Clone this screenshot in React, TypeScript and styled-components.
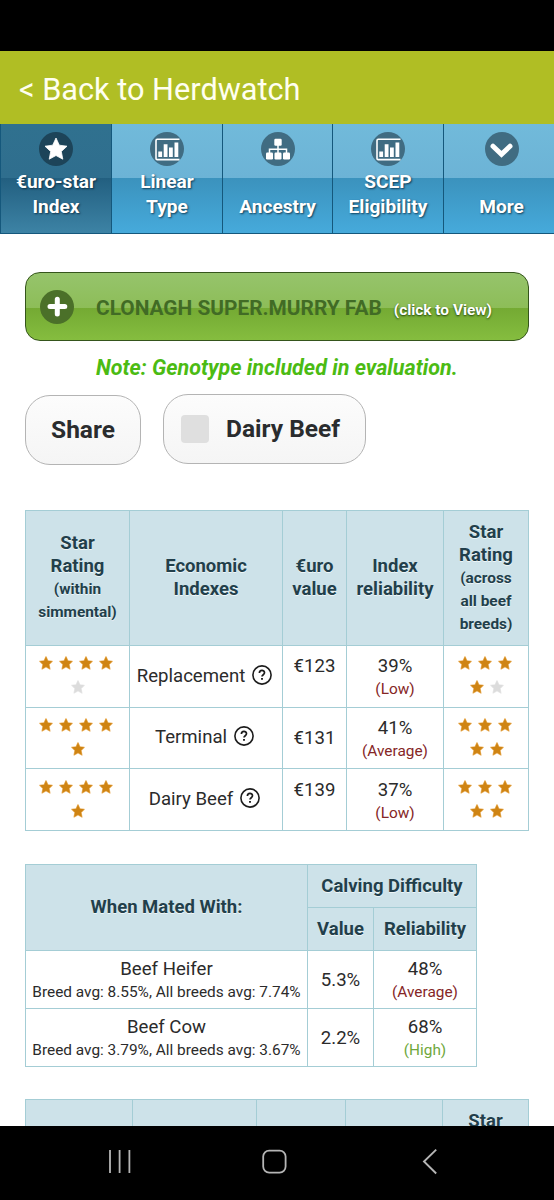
import React from 'react';
import styled, { createGlobalStyle, css } from 'styled-components';

const GlobalStyle = createGlobalStyle`
  *, *::before, *::after { box-sizing: border-box; }
  html, body { margin: 0; padding: 0; background: #fff; }
  body { font-family: Roboto, "Liberation Sans", sans-serif; color: #2b2b2b; }
  button { font-family: inherit; }
`;

const Screen = styled.div`
  width: 554px;
  height: 1200px;
  display: flex;
  flex-direction: column;
  overflow: hidden;
  background: #fff;
`;

const StatusBar = styled.div`
  height: 51px;
  flex: none;
  background: #000;
`;

const BackBar = styled.header`
  height: 73px;
  flex: none;
  display: flex;
  align-items: center;
  padding: 4px 0 0 19px;
  background: #b0be24;
  color: #fffff0;
  font-size: 30.7px;
  white-space: pre;
`;

const TabBar = styled.nav`
  height: 110px;
  flex: none;
  display: grid;
  grid-template-columns: 112px 111px 110px 111px 116px;
  width: 560px;
  border-bottom: 1px solid #15587c;
`;

const Tab = styled.a<{ $active?: boolean }>`
  display: flex;
  flex-direction: column;
  align-items: center;
  justify-content: space-between;
  padding: 8px 0 14px;
  border-right: 1px solid #15587c;
  color: #fff;
  font-size: 19.1px;
  font-weight: 700;
  line-height: 25px;
  text-align: center;
  white-space: pre-line;
  text-shadow: 1px 1px 2px rgba(0, 30, 50, 0.75);
  background: linear-gradient(#71bada 0, #6cb3d6 54px, #3b92bd 54px, #46aadb 109px);
  ${(p) =>
    p.$active &&
    css`
      border-left: 1px solid #15587c;
      background: linear-gradient(#30718f 0, #2f6e8e 54px, #225f80 54px, #3d83a5 109px);
    `}
`;

const Disc = styled.span<{ $tone: string }>`
  display: flex;
  flex: none;
  width: 34px;
  height: 34px;
  border-radius: 50%;
  background: ${(p) => p.$tone};
`;

const Content = styled.main`
  flex: 1;
  min-height: 0;
  overflow: hidden;
  padding: 38px 25px 0;
`;

const AnimalButton = styled.button`
  display: flex;
  align-items: center;
  width: 504px;
  height: 69px;
  padding: 0 0 0 14px;
  border: 1px solid #35551c;
  border-radius: 15px;
  background: linear-gradient(#96c46c 0, #8dbd58 35px, #74aa33 35px, #85bd3f 67px);
`;

const AnimalName = styled.span`
  margin: 2px 0 0 22px;
  font-size: 20.85px;
  font-weight: 700;
  line-height: 26px;
  color: #416b25;
  white-space: nowrap;
`;

const AnimalHint = styled.span`
  margin: 6px 0 0 12px;
  font-size: 15.4px;
  font-weight: 700;
  line-height: 20px;
  color: #fff;
  white-space: nowrap;
  text-shadow: 0 1px 2px rgba(20, 50, 0, 0.9);
`;

const Note = styled.p`
  margin: 13px 0 0 71px;
  font-size: 21.5px;
  font-weight: 700;
  font-style: italic;
  line-height: 28px;
  color: #4bbb13;
  white-space: nowrap;
`;

const Actions = styled.div`
  display: flex;
  align-items: flex-start;
  gap: 22px;
  margin-top: 12px;
`;

const Pill = styled.button<{ $width: number; $drop?: number }>`
  display: flex;
  align-items: center;
  justify-content: center;
  gap: 17px;
  width: ${(p) => p.$width}px;
  height: 70px;
  margin-top: ${(p) => p.$drop ?? 0}px;
  padding: 0 8px 1px 0;
  border: 1px solid #b4b4b4;
  border-radius: 25px;
  background: linear-gradient(#fcfcfc, #f5f5f5);
  color: #2a2c2e;
  font-size: 24.5px;
  font-weight: 700;
  line-height: 28px;
  white-space: nowrap;
`;

const SharePill = styled(Pill)`
  padding: 0 0 1px;
`;

const Check = styled.span`
  width: 28px;
  height: 28px;
  border-radius: 4px;
  background: #dfdfdf;
`;

const DataTable = styled.section<{ $cols: string; $rows: string; $gap: number }>`
  display: grid;
  width: max-content;
  grid-template-columns: ${(p) => p.$cols};
  grid-template-rows: ${(p) => p.$rows};
  margin-top: ${(p) => p.$gap}px;
  border: solid #a4cdd5;
  border-width: 1px 0 0 1px;
`;

const Cell = styled.div<{ $top?: boolean; $nudge?: number }>`
  display: flex;
  flex-direction: column;
  align-items: center;
  justify-content: ${(p) => (p.$top ? 'flex-start' : 'center')};
  padding-top: ${(p) => p.$nudge ?? 0}px;
  border: solid #a4cdd5;
  border-width: 0 1px 1px 0;
  font-size: 18.6px;
  line-height: 23px;
  text-align: center;
  white-space: pre;
`;

const HeadCell = styled(Cell)<{ $tall?: boolean; $wide?: boolean }>`
  background: #cde2e9;
  color: #223f4b;
  font-size: 18.5px;
  font-weight: 700;
  text-shadow: 0 1px 0 #eef6f8;
  ${(p) => p.$tall && 'grid-row: span 2;'}
  ${(p) => p.$wide && 'grid-column: span 2;'}
`;

const StarCell = styled(Cell)<{ $shift?: boolean }>`
  padding-right: ${(p) => (p.$shift ? 2 : 0)}px;
`;

const Small = styled.span<{ $color?: string }>`
  font-size: 15.4px;
  line-height: 23px;
  color: ${(p) => p.$color ?? 'inherit'};
`;

const Name = styled.span`
  display: flex;
  align-items: center;
  gap: 7px;
  padding: 0 3px 1px 0;
  svg { margin-bottom: 3px; }
`;

const Rating = styled.div`
  display: flex;
  flex-direction: column;
  gap: 8px;
`;

const StarLine = styled.div<{ $trail?: boolean }>`
  display: flex;
  justify-content: center;
  gap: 4px;
  ${(p) => p.$trail ? 'padding-right: 2px;' : 'padding-left: 2px;'}
`;

const NavBar = styled.footer`
  height: 74px;
  flex: none;
  background: #000;
  display: grid;
  grid-template-columns: 154px 159px 20px;
  padding: 22px 0 0 106px;
`;

const RED = '#852626';
const GREEN = '#6fa83c';
const BLUE_DISC = '#406c82';

const StarIcon = ({ on }: { on: boolean }) => (
  <svg width="16" height="16" viewBox="0 0 16 16">
    <path
      d="M8 1.8 L9.8 5.8 L14.2 6.3 L11 9.4 L11.9 14 L8 11.7 L4.1 14 L5 9.4 L1.8 6.3 L6.2 5.8 Z"
      fill={on ? '#cf8413' : '#dcdcdc'}
      stroke={on ? '#ecb566' : '#e9e9e9'}
      strokeWidth="1.3"
      strokeLinejoin="round"
      paintOrder="stroke"
    />
  </svg>
);

const Stars = ({ perLine, value }: { perLine: number; value: number }) => {
  const all = [0, 1, 2, 3, 4];
  return (
    <Rating>
      <StarLine $trail>
        {all.slice(0, perLine).map((i) => <StarIcon key={i} on={i < value} />)}
      </StarLine>
      <StarLine>
        {all.slice(perLine).map((i) => <StarIcon key={i} on={i < value} />)}
      </StarLine>
    </Rating>
  );
};

const HelpIcon = () => (
  <svg width="20" height="22" viewBox="1 0 20 22" fill="none" stroke="#1c1c1c">
    <circle cx="11" cy="11" r="9.1" strokeWidth="1.6" />
    <path d="M8.4 9 C8.4 5.6 13.5 5.6 13.5 8.8 C13.5 10.7 11 10.7 11 12.6" strokeWidth="1.7" />
    <path d="M11 13.9 V15.7" strokeWidth="1.9" />
  </svg>
);

const FilledStar = () => (
  <svg width="34" height="34" viewBox="0 0 34 34">
    <path
      d="M17 6 L20.3 13.2 L28 14.2 L22.3 19.5 L23.8 27.2 L17 23.5 L10.2 27.2 L11.7 19.5 L6 14.2 L13.7 13.2 Z"
      fill="#fff" stroke="#fff" strokeWidth="0.8" strokeLinejoin="round"
    />
  </svg>
);

const ChartIcon = () => (
  <svg width="34" height="34" viewBox="0 0 34 34">
    <path d="M29.5 7.3 H7.2 Q6 7.3 6 8.5 V26.4 Q6 27.6 7.2 27.6 H29.5" fill="none" stroke="#fff" strokeWidth="1.6" />
    <path d="M8.3 19.5 h3.8 v5.5 h-3.8 z M13.7 12.2 h3.8 V25 h-3.8 z M19 15.5 h3.8 V25 h-3.8 z M24.5 10.5 h3.8 V25 h-3.8 z" fill="#fff" />
  </svg>
);

const TreeIcon = () => (
  <svg width="34" height="34" viewBox="0 0 34 34">
    <path d="M17 12 V22 M8.5 22 V17.3 H25.5 V22" fill="none" stroke="#fff" strokeWidth="1.5" />
    <g fill="#fff">
      <rect x="13.3" y="6.8" width="7.4" height="7" rx="1.2" />
      <rect x="5" y="20.6" width="7" height="6.8" rx="1.2" />
      <rect x="13.5" y="20.6" width="7" height="6.8" rx="1.2" />
      <rect x="22" y="20.6" width="7" height="6.8" rx="1.2" />
    </g>
  </svg>
);

const ArrowIcon = () => (
  <svg width="34" height="34" viewBox="0 0 34 34">
    <path d="M8 14.2 L16.5 22.2 L25 14.2" fill="none" stroke="#fff" strokeWidth="5" strokeLinecap="round" />
  </svg>
);

const PlusIcon = () => (
  <svg width="34" height="34" viewBox="0 0 34 34">
    <path d="M17.3 9.2 V24 M10 16.6 H24.8" stroke="#fff" strokeWidth="5" strokeLinecap="round" />
  </svg>
);

const indexes = [
  { name: 'Replacement', euro: '€123', rel: '39%', level: '(Low)', within: 4, across: 4, top: true, pad: 9 },
  { name: 'Terminal', euro: '€131', rel: '41%', level: '(Average)', within: 5, across: 5, top: false, pad: 9 },
  { name: 'Dairy Beef', euro: '€139', rel: '37%', level: '(Low)', within: 5, across: 5, top: true, pad: 10 },
];

const matings = [
  { name: 'Beef Heifer', avg: 'Breed avg: 8.55%, All breeds avg: 7.74%', value: '5.3%', rel: '48%', level: '(Average)', color: RED },
  { name: 'Beef Cow', avg: 'Breed avg: 3.79%, All breeds avg: 3.67%', value: '2.2%', rel: '68%', level: '(High)', color: GREEN },
];

const WithinHead = ({ nudge }: { nudge?: number }) => (
  <HeadCell $nudge={nudge}>{'Star\nRating'}<Small>{'(within\nsimmental)'}</Small></HeadCell>
);

const AcrossHead = () => (
  <HeadCell>{'Star\nRating'}<Small>{'(across\nall beef\nbreeds)'}</Small></HeadCell>
);

export default function App() {
  return (
    <Screen>
      <GlobalStyle />
      <StatusBar />
      <BackBar>{'< Back to Herdwatch'}</BackBar>
      <TabBar>
        <Tab $active><Disc $tone="#1d4459"><FilledStar /></Disc>{'€uro-star\nIndex'}</Tab>
        <Tab><Disc $tone={BLUE_DISC}><ChartIcon /></Disc>{'Linear\nType'}</Tab>
        <Tab><Disc $tone={BLUE_DISC}><TreeIcon /></Disc>Ancestry</Tab>
        <Tab><Disc $tone={BLUE_DISC}><ChartIcon /></Disc>{'SCEP\nEligibility'}</Tab>
        <Tab><Disc $tone={BLUE_DISC}><ArrowIcon /></Disc>More</Tab>
      </TabBar>
      <Content>
        <AnimalButton>
          <Disc $tone="#4b7029"><PlusIcon /></Disc>
          <AnimalName>CLONAGH SUPER.MURRY FAB</AnimalName>
          <AnimalHint>(click to View)</AnimalHint>
        </AnimalButton>
        <Note>Note: Genotype included in evaluation.</Note>
        <Actions>
          <SharePill $width={116} $drop={1}>Share</SharePill>
          <Pill $width={203}><Check />Dairy Beef</Pill>
        </Actions>

        <DataTable $gap={45} $cols="104px 153px 64px 97px 85px" $rows="135px 62px 61px 62px">
          <WithinHead />
          <HeadCell>{'Economic\nIndexes'}</HeadCell>
          <HeadCell>{'€uro\nvalue'}</HeadCell>
          <HeadCell>{'Index\nreliability'}</HeadCell>
          <AcrossHead />
          {indexes.map((r) => (
            <React.Fragment key={r.name}>
              <StarCell $top $shift $nudge={r.pad}><Stars perLine={4} value={r.within} /></StarCell>
              <Cell><Name>{r.name}<HelpIcon /></Name></Cell>
              <Cell $top={r.top} $nudge={r.top ? r.pad : 0}>{r.euro}</Cell>
              <Cell $top $nudge={r.pad}>{r.rel}<Small $color={RED}>{r.level}</Small></Cell>
              <StarCell $top $nudge={r.pad}><Stars perLine={3} value={r.across} /></StarCell>
            </React.Fragment>
          ))}
        </DataTable>

        <DataTable $gap={33} $cols="282px 66px 103px" $rows="43px 43px 58px 58px">
          <HeadCell $tall>When Mated With:</HeadCell>
          <HeadCell $wide>Calving Difficulty</HeadCell>
          <HeadCell>Value</HeadCell>
          <HeadCell>Reliability</HeadCell>
          {matings.map((m) => (
            <React.Fragment key={m.name}>
              <Cell $nudge={2}>{m.name}<Small>{m.avg}</Small></Cell>
              <Cell $nudge={1}>{m.value}</Cell>
              <Cell $nudge={2}>{m.rel}<Small $color={m.color}>{m.level}</Small></Cell>
            </React.Fragment>
          ))}
        </DataTable>

        <DataTable $gap={32} $cols="107px 124px 89px 97px 86px" $rows="135px">
          <WithinHead nudge={1} />
          <HeadCell />
          <HeadCell />
          <HeadCell />
          <AcrossHead />
        </DataTable>
      </Content>
      <NavBar>
        <svg width="28" height="28" viewBox="0 0 28 28" stroke="#b5b5b5" strokeWidth="1.8">
          <path d="M4 2 V25 M13.6 2 V25 M23.4 2 V25" />
        </svg>
        <svg width="28" height="28" viewBox="0 0 28 28" fill="none" stroke="#b5b5b5" strokeWidth="1.8">
          <rect x="3.2" y="2.6" width="22.4" height="22" rx="6" />
        </svg>
        <svg width="20" height="28" viewBox="0 0 20 28" fill="none" stroke="#b5b5b5" strokeWidth="1.9">
          <path d="M17.2 1.6 L5 13.5 L17.2 25.5" />
        </svg>
      </NavBar>
    </Screen>
  );
}
